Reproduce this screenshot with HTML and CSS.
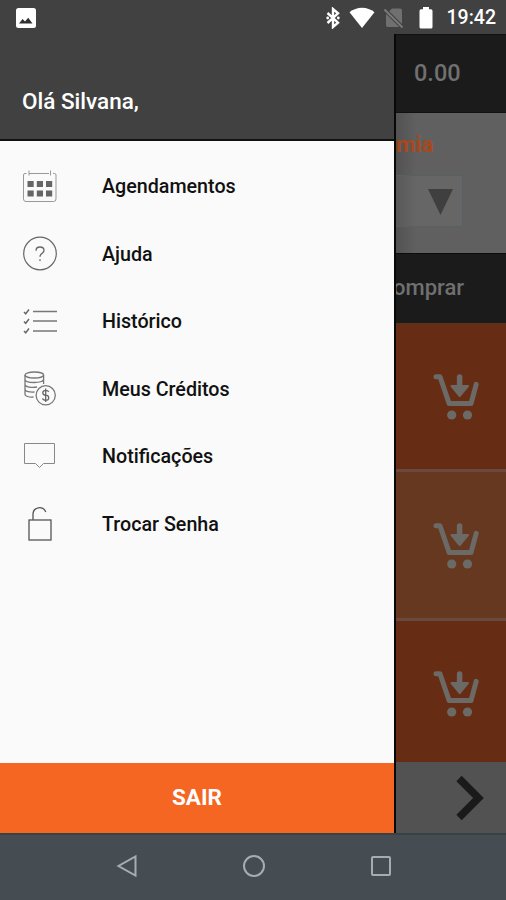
FILE: index.html
```
<!DOCTYPE html>
<html lang="pt-BR">
<head>
    <meta charset="UTF-8">
    <meta name="viewport" content="width=device-width, initial-scale=1.0">
    <title>Menu</title>
    <link rel="stylesheet" href="styles.css">
</head>
<body>
    <!-- Formas reutilizadas -->
    <svg class="simbolos">
        <symbol id="carrinho" viewBox="0 0 46 46">
            <path d="M3 2.8H7L16.2 29.6H38L43.2 10.3" fill="none" stroke="currentColor" stroke-width="5" stroke-linecap="round" stroke-linejoin="round"/>
            <path d="M26.6 3V12" stroke="currentColor" stroke-width="5.5" stroke-linecap="round"/>
            <path d="M18.5 12H35L26.7 22Z" fill="currentColor" stroke="currentColor" stroke-width="2" stroke-linejoin="round"/>
            <circle cx="18.7" cy="41" r="4.6" fill="currentColor"/>
            <circle cx="34.5" cy="41" r="4.6" fill="currentColor"/>
        </symbol>
    </svg>

    <div class="tela">
        <div class="barra-status">
            <svg class="icone-foto" width="20" height="20" viewBox="0 0 20 20">
                <rect width="20" height="20" rx="2.5" fill="#fff"/>
                <path d="M3 15.5L6.6 11L9 13.6L12.2 9.8L16.5 15.5Z" fill="#303030"/>
            </svg>
            <svg class="icone-bluetooth" width="14" height="22" viewBox="0 0 14 22">
                <path d="M1.5 6L12 15.7L7 20V2L12 6.3L1.5 16" fill="none" stroke="#fff" stroke-width="2.4"/>
                <circle cx="1.7" cy="11" r="1.4" fill="#fff"/>
                <circle cx="12.3" cy="11" r="1.4" fill="#fff"/>
            </svg>
            <svg class="icone-wifi" width="26" height="22" viewBox="0 0 26 22">
                <path d="M13 21L.5 5.3Q6 .8 13 .8T25.5 5.3Z" fill="#fff"/>
            </svg>
            <svg class="icone-chip" width="20" height="20" viewBox="0 0 20 20">
                <path d="M8 .5H16Q18 .5 18 2.5V19H4Q2 19 2 17V6.5Z" fill="#707070"/>
                <path d="M.5 1.5L18.5 19.5" stroke="#414141" stroke-width="4"/>
                <path d="M.5 1.5L18.5 19.5" stroke="#797979" stroke-width="2"/>
            </svg>
            <svg class="icone-bateria" width="14" height="22" viewBox="0 0 14 22">
                <path d="M4 0H10V2.3H12Q13.5 2.3 13.5 4V20Q13.5 21.5 12 21.5H2Q.5 21.5 .5 20V4Q.5 2.3 2 2.3H4Z" fill="#fff"/>
            </svg>
            <span class="hora">19:42</span>
        </div>

        <div class="conteudo">
            <nav class="menu">
                <div class="saudacao">Olá Silvana,</div>
                <ul class="opcoes">
                    <li>
                        <svg width="36" height="36" viewBox="0 0 36 36" fill="none" stroke="#999">
                            <path d="M7 4.5H27M31 4.5H32.5Q34 4.5 34 6V30Q34 32.5 31.5 32.5H4Q1.5 32.5 1.5 30V6Q1.5 4.5 3 4.5H4.5M7 1.5V6.5M28.5 1.5V6.5"/>
                            <path d="M5.5 15H11.7M14.8 15H21M24 15H30.2M5.5 24.5H11.7M14.8 24.5H21M24 24.5H30.2" stroke="#666" stroke-width="6"/>
                        </svg>
                        <span>Agendamentos</span>
                    </li>
                    <li>
                        <svg width="36" height="36" viewBox="0 0 36 36" fill="none" stroke="#666">
                            <circle cx="18" cy="17.5" r="16.3" stroke-width="1.2"/>
                            <path d="M14 14.7Q14 11 18 11T22 14.4C22 17.2 18 17.3 18 20.7M18 23.3V25" stroke-width="1.3"/>
                        </svg>
                        <span>Ajuda</span>
                    </li>
                    <li>
                        <svg width="36" height="36" viewBox="0 0 36 36" fill="none" stroke="#666">
                            <path d="M2 8L3.7 9.8L7 5.5M2 17.5L3.7 19.3L7 15M2 27L3.7 28.8L7 24.5" stroke-width="1.4"/>
                            <path d="M11 7.5H35M11 17H35M11 27H35" stroke="#777" stroke-width="1.3"/>
                        </svg>
                        <span>Histórico</span>
                    </li>
                    <li>
                        <svg width="36" height="36" viewBox="0 0 36 36" fill="none" stroke="#777" stroke-width="1.3">
                            <ellipse cx="12.3" cy="4" rx="9.3" ry="3"/>
                            <path d="M3 4V8.5C3 12.5 21.6 12.5 21.6 8.5V4M21.6 8.5V13M3 8.5V13.5C3 16 10 17 15 16M3 13.5V18.5C3 20.5 8 21.5 12.5 21M3 18.5V23.5C3 25 7 26.5 11.5 26"/>
                            <circle cx="23.7" cy="24.3" r="9.6"/>
                            <path d="M26.7 21Q26 19.3 23.7 19.3Q20.8 19.3 20.8 21.7T23.7 24.2T26.7 26.8T23.7 29.2Q21 29.2 20.5 27.3M23.7 17.5V31" stroke="#666"/>
                        </svg>
                        <span>Meus Créditos</span>
                    </li>
                    <li>
                        <svg width="36" height="36" viewBox="0 0 36 36" fill="none" stroke="#888">
                            <path d="M2.5 4.5H32.5V24.5H21.5L17.5 28.5L13.5 24.5H2.5Z"/>
                        </svg>
                        <span>Notificações</span>
                    </li>
                    <li>
                        <svg width="36" height="36" viewBox="0 0 36 36" fill="none" stroke="#555" stroke-width="1.3">
                            <rect x="7" y="14" width="22" height="20"/>
                            <path d="M11 14V8.5C11 .5 21 -.5 23.8 6"/>
                        </svg>
                        <span>Trocar Senha</span>
                    </li>
                </ul>
                <button class="sair">SAIR</button>
            </nav>

            <main class="pagina">
                <div class="saldo">0.00</div>
                <div class="filtro">
                    <div class="titulo">mia</div>
                    <div class="seletor"><div class="seta"></div></div>
                </div>
                <div class="cabecalho-tabela">omprar</div>
                <div class="linha"><svg width="46" height="46"><use href="#carrinho"/></svg></div>
                <div class="linha clara"><svg width="46" height="46"><use href="#carrinho"/></svg></div>
                <div class="linha ultima"><svg width="46" height="46"><use href="#carrinho"/></svg></div>
                <div class="paginacao">
                    <svg width="28" height="46" viewBox="0 0 28 46">
                        <path d="M3 3.5L22.5 23L3 42.5" fill="none" stroke="#1a1a1a" stroke-width="7.5"/>
                    </svg>
                </div>
            </main>
        </div>

        <div class="barra-navegacao">
            <svg width="22" height="24" viewBox="0 0 22 24"><path d="M19.5 2.5V21.5L2.5 12Z"/></svg>
            <svg width="24" height="24" viewBox="0 0 24 24"><circle cx="12" cy="12" r="10"/></svg>
            <svg width="22" height="24" viewBox="0 0 22 24"><rect x="2" y="3" width="18" height="18" rx="1"/></svg>
        </div>
    </div>
</body>
</html>
```
FILE: styles.css
```
* {
    box-sizing: border-box;
}

body {
    margin: 0;
    font-family: Roboto, sans-serif;
}

.simbolos {
    display: none;
}

.tela {
    width: 506px;
    height: 900px;
    display: flex;
    flex-direction: column;
    overflow: hidden;
    background-color: #414141;
}

.barra-status {
    height: 34px;
    display: flex;
    align-items: center;
    padding: 1px 10px 0 16px;
    color: white;
}

.icone-bluetooth {
    margin-left: auto;
}

.icone-wifi {
    margin-left: 9px;
}

.icone-chip {
    margin-left: 9px;
}

.icone-bateria {
    margin-left: 15px;
}

.hora {
    margin-left: 14px;
    font-size: 19.5px;
    font-weight: 500;
}

.conteudo {
    height: 799px;
    display: flex;
}

.menu {
    width: 394px;
    display: flex;
    flex-direction: column;
    background-color: #fafafa;
}

.saudacao {
    height: 107px;
    padding: 53px 22px 0;
    background-color: #414141;
    border-bottom: 2px solid #111;
    color: white;
    font-size: 22.5px;
    font-weight: 500;
    line-height: 28px;
}

.opcoes {
    list-style: none;
    margin: 0;
    padding: 12px 22px 0;
    flex: 1;
}

.opcoes li {
    height: 67.5px;
    display: flex;
    align-items: center;
    gap: 44px;
    font-size: 19.7px;
    font-weight: 500;
    color: #111;
}

.sair {
    height: 70px;
    padding-bottom: 3px;
    border: none;
    background-color: #f56622;
    color: white;
    font-family: inherit;
    font-size: 22.5px;
    font-weight: 700;
}

.pagina {
    flex: 1;
    display: flex;
    flex-direction: column;
    overflow: hidden;
    border-left: 2px solid #080808;
    background-color: #606060;
}

.saldo {
    height: 79px;
    padding: 24px 0 0 18px;
    background-color: #1b1b1b;
    border-bottom: 1px solid #111;
    border-top: 1px solid #111;
    color: #707070;
    font-size: 23.5px;
    font-weight: 500;
    line-height: 28px;
}

.filtro {
    height: 140px;
    padding-top: 17px;
    background-image: linear-gradient(to right, #525252, #606060 20px);
}

.titulo {
    color: #a8481c;
    font-size: 22.5px;
    font-weight: 700;
    line-height: 28px;
}

.seletor {
    width: 67px;
    height: 52px;
    margin-top: 17px;
    padding: 13px 9px 0 0;
    border: 1px solid #586064;
    border-left: none;
    background-image: linear-gradient(to right, #585858, #666 20px);
}

.seta {
    margin-left: auto;
    width: 25px;
    height: 26px;
    background-color: #3f3f3f;
    clip-path: polygon(0 0, 100% 0, 50% 100%);
}

.cabecalho-tabela {
    height: 70px;
    padding-top: 20px;
    background-color: #1b1b1b;
    border-top: 1px solid #0c0c0c;
    border-bottom: 1px solid #0b2422;
    color: #707070;
    font-size: 22px;
    font-weight: 500;
    line-height: 28px;
    text-indent: -3px;
}

.linha {
    height: 149px;
    display: flex;
    align-items: center;
    padding: 2px 0 0 37px;
    background-color: #662d14;
    border-bottom: 3px solid #694940;
    color: #6b6a66;
}

.linha.clara {
    background-color: #673820;
}

.linha.ultima {
    height: 141px;
    padding-top: 4px;
    border-bottom: none;
}

.paginacao {
    flex: 1;
    display: flex;
    align-items: center;
    padding-left: 60px;
    background-color: #525252;
}

.barra-navegacao {
    flex: 1;
    display: flex;
    align-items: center;
    justify-content: center;
    gap: 104px;
    padding: 0 0 3px 1px;
    background-color: #464d52;
    border-top: 2px solid #394247;
}

.barra-navegacao svg {
    fill: none;
    stroke: #a6acaf;
    stroke-width: 2;
}
```
